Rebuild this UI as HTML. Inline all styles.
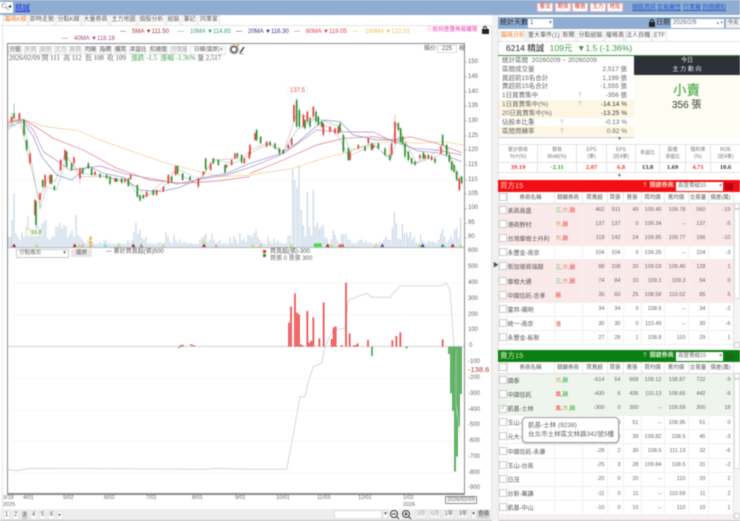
<!DOCTYPE html>
<html><head><meta charset="utf-8"><style>
html,body{margin:0;padding:0;background:#fff}
#p{position:relative;width:740px;height:521px;overflow:hidden;background:#fff;font-family:"Liberation Sans","Noto Sans CJK TC",sans-serif;font-size:6.5px;color:#555;filter:blur(.4px)}
.a,.t{position:absolute}.t{white-space:nowrap;line-height:9px}
.b{position:absolute;box-sizing:border-box;background:#f3f3f3;border:1px solid #e2e2e2;height:9px;line-height:7px;text-align:center;font-size:5.5px;color:#555;white-space:nowrap}
.tab{position:absolute;box-sizing:border-box;background:#fff;border:1px solid #e4e4e4;border-bottom:0;height:10px;line-height:9px;text-align:center;font-size:6px;color:#555;white-space:nowrap}
.red{position:absolute;top:3px;height:9px;width:16px;background:#fff;border:1px solid #f4c0c0;box-sizing:border-box;color:#c33;font-size:5.5px;line-height:7px;text-align:center}
.lnk{position:absolute;top:4px;color:#2255cc;text-decoration:underline;font-size:6px;white-space:nowrap;line-height:9px}
table{position:absolute;border-collapse:collapse;table-layout:fixed;font-size:5.5px;color:#666}
td{padding:0;white-space:nowrap;overflow:hidden;border-right:1px solid #f0f2f2;text-align:right;padding-right:2px;box-sizing:border-box}
.k td{height:14.2px;border-bottom:1px solid #f0f0f0}
.h td{height:11px;text-align:center;border-right:1px solid #e4e4e4;border-bottom:1px solid #ddd;padding:0;color:#555}
td.n{text-align:left;padding-left:0;color:#555;font-size:6px}
td.m{text-align:left;padding-left:1px;font-size:5.5px}
.c{display:inline-block;width:6px;height:6px;border:1px solid #ccc;background:#fff;vertical-align:-1px}
.p td{background:#fbe9e9}.g td{background:#edf5ec}
i{font-style:normal}.rr{color:#e33}.gg{color:#2a2}.oo{color:#c96}
.s{position:absolute;left:502px;width:125px;height:9px;line-height:9px;font-size:6.5px;color:#666;white-space:nowrap}
.s b{position:absolute;right:0;font-weight:normal}
.st{position:absolute;text-align:center;font-size:5px;line-height:6.5px;color:#777;white-space:nowrap}
.sv{position:absolute;text-align:center;font-family:"Liberation Serif",serif;font-size:6.5px;font-weight:bold;top:163px;line-height:9px;color:#333}
.y{position:absolute;left:468px;font-size:6px;line-height:8px;color:#666}
.x{position:absolute;top:495px;font-size:5.5px;line-height:7px;color:#666;text-align:left}
.lg{font-size:6px}
</style></head><body><div id="p">

<!-- top bar -->
<div class="a" style="left:0;top:0;width:740px;height:15px;background:#8fadd1"></div>
<div class="a" style="left:0;top:2px;width:13px;height:11px;background:#fff"></div>
<div class="t" style="left:1px;top:3px;font-size:7px;color:#555">🔍︎</div>
<div class="t" style="left:8px;top:3px;font-size:6px;color:#222">◂</div>
<div class="t" style="left:15px;top:3px;font-size:7.5px;color:#1a35e0;text-decoration:underline">精誠</div>
<div class="red" style="left:537px">看法</div><div class="red" style="left:555px">期貨</div><div class="red" style="left:572px">權值</div><div class="red" style="left:590px">主力</div><div class="red" style="left:607px">地址</div>
<span class="lnk" style="left:632px">個股資訊</span><span class="lnk" style="left:657px">交易屬性</span><span class="lnk" style="left:683px">行業屬</span><span class="lnk" style="left:702px">到價通知</span>

<!-- left tabs -->
<div class="a" style="left:0;top:15px;width:492px;height:10px;background:#fff"></div>
<div class="tab" style="left:3px;top:15px;width:25px;color:#e8883a">籌碼K線</div>
<div class="tab" style="left:29px;top:15px;width:26px">即時走勢</div>
<div class="tab" style="left:56px;top:15px;width:25px">分點K線</div>
<div class="tab" style="left:82px;top:15px;width:27px">大量券商</div>
<div class="tab" style="left:110px;top:15px;width:27px">主力地圖</div>
<div class="tab" style="left:138px;top:15px;width:27px">個股分析</div>
<div class="tab" style="left:166px;top:15px;width:15px">組裝</div>
<div class="tab" style="left:182px;top:15px;width:15px">筆記</div>
<div class="tab" style="left:198px;top:15px;width:22px">同業家</div>
<div class="a" style="left:0;top:25px;width:492px;height:1px;background:#e4e4e4"></div>
<div class="a" style="left:2px;top:26px;width:1px;height:483px;background:#e4e4e4"></div>
<div class="a" style="left:491px;top:26px;width:1px;height:483px;background:#e4e4e4"></div>

<!-- legend -->
<div class="t lg" style="left:120px;top:28px;color:#a33">—</div><div class="t lg" style="left:132px;top:28px;color:#a33">5MA ▼111.50</div>
<div class="t lg" style="left:178px;top:28px;color:#3a9a8a">—</div><div class="t lg" style="left:190px;top:28px;color:#3a9a8a">10MA ▼114.85</div>
<div class="t lg" style="left:236px;top:28px;color:#338">—</div><div class="t lg" style="left:248px;top:28px;color:#338">20MA ▼116.30</div>
<div class="t lg" style="left:294px;top:28px;color:#e04050">—</div><div class="t lg" style="left:306px;top:28px;color:#e04050">60MA ▼119.05</div>
<div class="t lg" style="left:352px;top:28px;color:#e8c25a">—</div><div class="t lg" style="left:365px;top:28px;color:#e8c25a">100MA ▼122.03</div>
<div class="t lg" style="left:62px;top:35px;color:#a04a80">—</div><div class="t lg" style="left:74px;top:35px;color:#a04a80">40MA ▼118.18</div>
<div class="t" style="left:427px;top:26px;color:#e830b0;font-size:5.6px">ⓘ如何查匯佈局權限</div>
<div class="a" style="left:482px;top:29px;width:7px;height:5px;background:#222"></div>
<div class="a" style="left:483px;top:26px;width:4px;height:4px;border:1px solid #222;border-bottom:0;box-sizing:border-box;border-radius:2px 2px 0 0"></div>

<!-- chart frame -->
<div class="a" style="left:7px;top:43px;width:458px;height:452px;box-sizing:border-box;border:1px solid #8a8a8a;border-bottom-width:2px"></div>
<div class="a" style="left:7px;top:247px;width:458px;height:1px;background:#aaa"></div>

<div class="b" style="left:8px;top:46px;width:14px">分圖</div>
<div class="b" style="left:24px;top:46px;width:13px;color:#aaa">外資</div>
<div class="b" style="left:39px;top:46px;width:13px;color:#aaa">投信</div>
<div class="b" style="left:54px;top:46px;width:13px;color:#aaa">主力</div>
<div class="b" style="left:69px;top:46px;width:13px;color:#aaa">新買</div>
<div class="b" style="left:84px;top:46px;width:13px">均線</div>
<div class="b" style="left:99px;top:46px;width:13px">指標</div>
<div class="b" style="left:114px;top:46px;width:13px">櫃買</div>
<div class="b" style="left:129px;top:46px;width:17px">本益比</div>
<div class="b" style="left:149px;top:46px;width:19px">紅綠燈</div>
<div class="b" style="left:170px;top:46px;width:17px;color:#aaa">分價量</div>
<div class="b" style="left:190px;top:46px;width:36px;text-align:left;padding-left:3px;background:#fff">日線(還原)<i style="position:absolute;right:2px;color:#999">▾</i></div>
<svg class="a" style="left:229px;top:44px" width="16" height="11" viewBox="0 0 16 11"><circle cx="5" cy="5.5" r="3" fill="none" stroke="#444" stroke-width="1.3"/><circle cx="5" cy="5.5" r="4.5" fill="none" stroke="#444" stroke-width=".8" stroke-dasharray="1 1"/><circle cx="9" cy="1.5" r="1" fill="#f80"/><path d="M11 9l4-6" stroke="#444" stroke-width="1.5"/><path d="M10 10h5" stroke="#777" stroke-width=".6"/></svg>
<div class="t" style="left:9px;top:54px;font-size:6.8px;color:#555;font-family:'Liberation Serif','Noto Serif CJK SC',serif">2026/02/09 開 111&nbsp; 高 112&nbsp; 低 108&nbsp; 收 109&nbsp;&nbsp; <span style="color:#3a9a3a">漲跌 -1.5&nbsp; 漲幅 -1.36%</span> 量 2,517</div>
<div class="t" style="left:424px;top:45px;font-size:6px;color:#666">贖价:</div>
<div class="a" style="left:437px;top:45px;width:20px;height:8px;border:1px solid #ddd;box-sizing:border-box;text-align:center;line-height:6px;font-size:6px">225</div>
<div class="t" style="left:459px;top:45px;font-size:5.5px">根</div>

<!-- price axis -->
<div class="y" style="top:58px">150</div><div class="y" style="top:73px">145</div><div class="y" style="top:88px">140</div><div class="y" style="top:102px">135</div><div class="y" style="top:117px">130</div><div class="y" style="top:132px">125</div><div class="y" style="top:146px">120</div><div class="y" style="top:161px">115</div><div class="y" style="top:176px">110</div><div class="y" style="top:190px">105</div><div class="y" style="top:204px">100</div><div class="y" style="top:219px">95</div><div class="y" style="top:233px">90</div>
<div class="y" style="top:247px">600</div><div class="y" style="top:263px">500</div><div class="y" style="top:279px">400</div><div class="y" style="top:295px">300</div><div class="y" style="top:311px">200</div><div class="y" style="top:326px">100</div><div class="y" style="top:342px;left:469px">0</div><div class="y" style="top:358px">-100</div><div class="y" style="top:374px">-200</div><div class="y" style="top:390px">-300</div><div class="y" style="top:406px">-400</div><div class="y" style="top:421px">-500</div><div class="y" style="top:437px">-600</div><div class="y" style="top:453px">-700</div><div class="y" style="top:469px">-800</div><div class="y" style="top:484px">-900</div>
<div class="t" style="left:468px;top:365px;font-size:7.5px;color:#b33">-138.6</div>

<svg class="a" style="left:0;top:0" width="480" height="521" viewBox="0 0 480 521">
<path d="M465 62h2M465 77h2M465 92h2M465 106h2M465 121h2M465 136h2M465 150h2M465 165h2M465 180h2M465 194h2M465 209h2M465 223h2M465 238h2" stroke="#888" stroke-width=".6"/>
<path d="M8 180H463" stroke="#f2f2f2" stroke-width=".6"/>
<path d="M12 283H462M12 315H462M12 378H462M12 410H462M12 441H462M12 473H462" stroke="#efefef" stroke-width=".6"/>
<path d="M8 346.5H464" stroke="#c0c0c0" stroke-width=".7"/>
<g transform="translate(0,80) scale(.33333)" fill="none" stroke-linejoin="round">
<path d="M26 503V470M32 503V470M36 503V420M42 503V340M48 503V460M54 503V470M60 503V480M66 503V455M72 503V470M78 503V440M84 503V408M90 503V445M96 503V455M102 503V470M108 503V470M114 503V435M120 503V445M126 503V430M132 503V425M138 503V420M144 503V475M150 503V480M156 503V470M162 503V470M168 503V440M174 503V440M180 503V428M186 503V445M192 503V435M198 503V440M204 503V470M210 503V460M216 503V450M222 503V470M228 503V405M234 503V465M240 503V470M246 503V478M252 503V485M258 503V490M264 503V480M270 503V468M276 503V485M282 503V490M288 503V492M294 503V490M300 503V485M306 503V490M312 503V482M318 503V480M324 503V490M330 503V488M336 503V492M342 503V490M348 503V492M354 503V488M360 503V490M366 503V492M372 503V492M378 503V490M384 503V480M390 503V488M396 503V480M402 503V455M408 503V428M414 503V460M420 503V450M426 503V472M432 503V478M438 503V470M444 503V490M450 503V488M456 503V492M462 503V490M468 503V492M474 503V488M480 503V486M486 503V492M492 503V488M498 503V458M504 503V470M510 503V485M516 503V490M522 503V465M528 503V480M534 503V488M540 503V478M546 503V490M552 503V485M558 503V488M564 503V492M570 503V488M576 503V490M582 503V492M588 503V490M594 503V492M600 503V480M606 503V472M612 503V468M618 503V460M624 503V485M630 503V478M636 503V460M642 503V480M648 503V490M654 503V486M660 503V480M666 503V492M672 503V488M678 503V490M684 503V492M690 503V472M696 503V488M702 503V468M708 503V478M714 503V490M720 503V460M726 503V480M732 503V475M738 503V485M744 503V465" stroke="#c7d6e6" stroke-width="3.6"/>
<path d="M22 120L70 118L130 138L180 146L230 150L300 180L400 215L500 250L600 275L660 290L750 285" stroke="#f0c98a" stroke-width="2"/>
<path d="M22 125L70 118L110 142L160 175L250 210L350 265L450 300L550 310L650 303L750 290" stroke="#e0707c" stroke-width="2"/>
<path d="M22 130L70 120L100 150L130 215L160 235L210 270L300 258L370 280L420 290L470 298L530 312L600 298L680 285L750 262" stroke="#b888b8" stroke-width="2"/>
<path d="M22 140L70 125L100 170L125 230L170 285L215 300L265 258L310 280L370 292L420 330L480 335L540 322L600 295L680 280L750 250" stroke="#7f8fc4" stroke-width="2"/>
<path d="M22 150L68 118L90 220L120 385L140 320L170 330L200 230L240 280L300 285L385 305L420 355L490 325L530 265L600 300L640 240L700 250L750 225" stroke="#8fd0bb" stroke-width="1.8"/>
<path d="M22 135L60 118L85 230L118 360L145 290L165 305L195 220L240 290L320 290L410 320L440 350L520 275L590 310L640 240L720 235L750 215" stroke="#e09090" stroke-width="1.5"/>
<path d="M35 98V135M58 95V125M90 215V255M105 355V410M120 335V388M135 280V325M150 280V315M182 235V275M195 205V245M222 228V255M240 262V310M392 280V300M375 292V308M345 292V308M285 272V288M440 332V352M470 328V348M490 318V338M505 282V315M527 255V290M595 290V328M610 272V290M632 245V275M680 250V265M705 217V238M748 210V238M695 236V258M733 232V252" stroke="#e67a7a" stroke-width="1.5"/>
<path d="M35 110V125M58 100V118M90 220V250M105 360V405M120 340V360M135 285V320M150 285V310M182 240V270M195 210V240M222 232V250M240 265V295M392 285V298M375 295V305M345 295V305M285 275V285M440 335V350M470 330V345M490 320V335M505 285V310M527 258V285M595 295V320M610 275V285M632 250V270M680 255V262M705 220V235M748 215V235M695 240V255M733 235V250" stroke="#e83b3b" stroke-width="5"/>
<path d="M42 70V118M72 118V170M80 178V215M108 360V445M128 298V325M155 282V315M163 315V333M200 212V265M215 248V275M248 262V284M265 245V268M275 262V288M300 280V295M320 283V298M330 288V316M350 293V308M365 293V312M385 293V322M412 313V355M420 343V365M430 343V358M460 328V348M515 288V308M533 255V284M548 278V303M570 288V303M617 232V272M640 232V254M655 238V258M675 252V280M712 216V236M725 222V252" stroke="#3ca43c" stroke-width="1.5"/>
<path d="M42 100V115M72 120V165M80 180V210M108 365V435M128 300V320M155 285V310M163 318V330M200 215V260M215 250V270M248 265V280M265 250V265M275 265V285M300 282V292M320 285V295M330 290V312M350 295V305M365 295V308M385 295V318M412 315V350M420 345V362M430 345V355M460 330V345M515 290V305M533 258V280M548 280V300M570 290V300M617 235V268M640 235V250M655 240V255M675 255V278M712 220V232M725 225V248" stroke="#2f8f2f" stroke-width="5"/>
<path d="M36 501l6-11 6 11zM218 501l6-11 6 11zM394 501l6-11 6 11zM606 501l6-11 6 11z" fill="#a82a3a"/>
<path d="M104 501l6-11 6 11zM232 501l6-11 6 11zM352 501l6-11 6 11zM484 501l6-11 6 11zM606 490l6-11 6 11z" fill="#b7e67a"/>
<path d="M242 501l6-11 6 11zM642 501l6-11 6 11z" fill="#efa6a0"/>
<path d="M266 501l6-11 6 11zM266 490l6-10 6 10zM266 478l6-10 6 10z" fill="#f2b040"/>
<path d="M310 501l6-11 6 11z" fill="#6fe2e2"/><path d="M418 501l6-11 6 11z" fill="#999"/>
<rect x="92" y="452" width="36" height="16" fill="#eef6d8"/>
</g>
<g transform="translate(250,80) scale(.33333)" fill="none">
<path d="M0 503V465M6 503V470M12 503V460M18 503V448M24 503V470M30 503V480M36 503V488M42 503V490M48 503V492M54 503V470M60 503V485M66 503V490M72 503V475M78 503V488M84 503V482M90 503V488M96 503V490M102 503V492M108 503V490M114 503V468M120 503V465M128 503V268M134 503V300M141 503V323M147 503V255M154 503V388M160 503V435M166 503V470M172 503V335M178 503V440M184 503V465M190 503V330M196 503V440M202 503V428M208 503V445M214 503V440M220 503V435M226 503V472M232 503V475M238 503V490M244 503V478M250 503V450M256 503V465M262 503V480M268 503V490M275 503V462M281 503V462M288 503V462M294 503V478M300 503V480M306 503V488M312 503V490M318 503V492M324 503V484M330 503V478M336 503V480M342 503V488M348 503V482M354 503V490M360 503V486M366 503V490M372 503V492M378 503V488M384 503V490M390 503V484M396 503V488M402 503V478M408 503V470M414 503V478M420 503V480M427 503V445M433 503V397M439 503V430M445 503V475M451 503V478M457 503V432M463 503V460M470 503V458M475 503V472M481 503V455M487 503V478M493 503V470M499 503V488M505 503V490M512 503V465M518 503V482M524 503V488M530 503V490M536 503V482M542 503V486M548 503V484M554 503V486M560 503V490M566 503V480M572 503V460M578 503V447M584 503V470M590 503V488M596 503V480M602 503V468M608 503V478M614 503V448M620 503V445M626 503V472M632 503V412" stroke="#c7d6e6" stroke-width="3.6"/>
<path d="M0 285L130 265L220 235L300 215L370 190L430 185L500 190L580 185L640 195" stroke="#f0c98a" stroke-width="2"/>
<path d="M0 280L100 240L200 195L280 175L370 170L430 180L480 170L560 190L635 218" stroke="#e0707c" stroke-width="2"/>
<path d="M0 262L100 222L200 150L260 155L310 156L370 156L430 185L490 205L560 210L635 225" stroke="#b888b8" stroke-width="2"/>
<path d="M0 250L90 222L140 190L220 120L270 125L310 165L380 180L440 180L500 212L570 220L635 245" stroke="#7f8fc4" stroke-width="2"/>
<path d="M0 220L60 190L100 215L140 150L200 115L270 140L300 210L370 190L420 240L445 170L490 250L540 230L580 190L635 300" stroke="#8fd0bb" stroke-width="1.8"/>
<path d="M0 210L50 190L100 220L140 100L200 120L260 160L295 230L370 195L415 230L440 130L500 250L570 225L590 195L632 325" stroke="#e09090" stroke-width="1.5"/>
<path d="M0 190V230M15 155V185M50 182V204M115 190V208M125 172V198M132 72V128M160 100V145M172 90V130M190 78V115M220 125V170M240 135V160M255 140V165M265 135V165M300 210V245M325 192V210M355 172V195M370 192V210M425 185V230M435 105V195M510 220V240M525 222V240M545 225V245M573 195V225M628 290V335" stroke="#e67a7a" stroke-width="1.5"/>
<path d="M0 195V225M15 160V180M50 185V200M115 195V205M125 175V195M132 75V125M160 105V140M172 95V125M190 80V110M220 130V165M240 140V155M255 145V160M265 140V160M300 215V240M325 195V205M355 175V190M370 195V205M425 190V225M435 125V190M510 225V235M525 225V235M545 230V240M573 200V220M628 295V330" stroke="#e83b3b" stroke-width="5"/>
<path d="M20 145V185M32 168V193M60 182V198M75 187V208M88 202V228M100 207V222M140 55V145M148 85V145M165 117V150M180 112V145M198 90V130M205 107V140M215 122V145M270 127V160M280 162V220M295 202V243M345 197V215M365 187V213M385 187V208M405 202V230M420 222V245M445 125V155M452 142V190M458 167V195M465 187V235M475 212V245M485 232V255M495 242V258M520 215V238M535 222V238M555 232V252M578 162V198M590 190V230M598 222V250M605 242V275M612 252V280M620 272V305M635 287V315" stroke="#3ca43c" stroke-width="1.5"/>
<path d="M20 150V180M32 170V190M60 185V195M75 190V205M88 205V220M100 210V220M140 60V140M148 90V140M165 120V145M180 115V140M198 95V125M205 110V135M215 125V140M270 130V155M280 165V215M295 205V240M345 200V212M365 190V210M385 190V205M405 205V225M420 225V240M445 130V150M452 145V185M458 170V190M465 190V230M475 215V240M485 235V250M495 245V255M520 218V235M535 225V235M555 235V248M578 165V195M590 195V225M598 225V245M605 245V270M612 255V275M620 275V300M635 290V310" stroke="#2f8f2f" stroke-width="5"/>
<path d="M2 501l6-11 6 11zM117 501l6-11 6 11zM239 501l6-11 6 11zM372 501l6-11 6 11zM502 501l6-11 6 11zM626 501l6-11 6 11z" fill="#b7e67a"/>
<path d="M26 501l6-11 6 11z" fill="#f2c070"/><rect x="191" y="490" width="25" height="11" rx="5" fill="#44e044"/>
<path d="M227 501l6-11 6 11zM602 501l6-11 6 11z" fill="#a82a3a"/><path d="M264 501l6-11 6 11zM272 501l6-11 6 11z" fill="#e05a4a"/>
<path d="M391 501l6-11 6 11z" fill="#7a3aa0"/><path d="M512 501l6-11 6 11z" fill="#2a3aa0"/><path d="M572 501l6-11 6 11z" fill="#2a9a8a"/>
<rect x="110" y="21" width="62" height="22" rx="3" fill="#fff" stroke="#eadfc0"/>
</g>
<g transform="translate(250,250) scale(.33333)" fill="none">
<path d="M-730 657L-700 662L-660 655L-400 656L-140 658L-100 655L0 658L110 658L125 580L150 440L165 440L175 395L190 350L215 340L225 290L250 240L285 235L295 150L350 130L365 142L420 142L450 108L570 108L590 100L600 120L612 290L618 460L630 560" stroke="#cfcfcf" stroke-width="2.4"/>
<path d="M117 290V218M123 290V170M135 290V130M141 290V188M147 290V193M153 290V283M159 290V287M172 290V183M178 290V278M184 290V272M190 290V202M208 290V265M221 290V157M245 290V267M251 290V232M257 290V229M275 290V285M288 290V98M299 290V250M311 290V286M317 290V285M323 290V280M354 290V270M427 290V271M439 290V258M451 290V247M578 290V268" stroke="#ee4a4a" stroke-width="5"/>
<path d="M366 290V318M470 290V295M597 290V312M603 290V430M609 290V483M615 290V665M621 290V620M627 290V530M633 290V432" stroke="#44a44c" stroke-width="5"/>
<path d="M618 300L618 460L630 560" stroke="#d9e8d9" stroke-width="2"/>
<path d="M-210 287h12M-180 285h8M-172 288h6" stroke="#e33" stroke-width="3"/>
<path d="M-215 292h6" stroke="#393" stroke-width="3"/>
</g>
<rect x="26" y="230" width="14" height="6" fill="#f4f9e4"/>
</svg>
<div class="t" style="left:31px;top:229px;font-size:5.5px;color:#5a8a3a">93.8</div>
<div class="t" style="left:290px;top:87px;font-size:6px;color:#d55">137.5</div>

<!-- lower controls -->
<div class="a" style="left:16px;top:249px;width:53px;height:9px;border:1px solid #ccc;box-sizing:border-box;font-size:5.5px;line-height:7px;padding-left:2px;color:#666">分點進出<i style="position:absolute;right:2px">▾</i></div>
<div class="a" style="left:71px;top:249px;width:21px;height:8px;background:#e6e6e6;text-align:center;font-size:5.5px;line-height:8px">還原</div>
<div class="t" style="left:106px;top:248px;font-size:6px;color:#555">— 累計買賣超(張)500</div>
<div class="t" style="left:270px;top:248px;font-size:6px;color:#555">買賣超(張)-300</div>
<div class="t" style="left:270px;top:255px;font-size:6px;color:#666">買張 0 賣張 300</div>
<div class="a" style="left:263px;top:250px;width:3px;height:3px;background:#d33"></div>
<div class="a" style="left:263px;top:254px;width:3px;height:3px;background:#292"></div>

<!-- x axis -->
<div class="x" style="left:3px">3/18<br>2025</div><div class="x" style="left:23px">4/01</div><div class="x" style="left:63px">5/02</div><div class="x" style="left:104px">6/02</div><div class="x" style="left:146px">7/01</div><div class="x" style="left:192px">8/01</div><div class="x" style="left:235px">9/01</div><div class="x" style="left:276px">10/01</div><div class="x" style="left:317px">11/03</div><div class="x" style="left:358px">12/01</div><div class="x" style="left:403px">1/02<br>2026</div>
<div class="a" style="left:445px;top:496px;width:32px;height:8px;border:1px solid #888;box-sizing:border-box;border-radius:1px;font-size:5.5px;line-height:6px;text-align:center;background:#fff">2026/02/09</div>

<!-- bottom bar -->
<div class="a" style="left:0;top:509px;width:492px;height:11px;background:#eeeeee"></div>
<div class="a" style="left:0;top:520px;width:740px;height:1px;background:#bbb"></div>
<div class="b" style="left:3px;top:511px;width:7px;background:#fff;font-size:6px">1</div><div class="b" style="left:12px;top:511px;width:7px;background:#fff;font-size:6px">2</div><div class="b" style="left:21px;top:511px;width:7px;background:#ccc;font-size:6px">3</div><div class="b" style="left:30px;top:511px;width:7px;background:#fff;font-size:6px">4</div><div class="b" style="left:39px;top:511px;width:7px;background:#fff;font-size:6px">5</div><div class="b" style="left:48px;top:511px;width:7px;background:#fff;font-size:6px">6</div><div class="b" style="left:57px;top:511px;width:6px;background:#fff;font-size:5px">▸</div>
<div class="a" style="left:334px;top:510px;width:48px;height:9px;background:#fff;border:1px solid #ddd;box-sizing:border-box"></div>
<div class="b" style="left:383px;top:510px;width:5px;background:#fff">▾</div>
<svg class="a" style="left:389px;top:509px" width="24" height="11" viewBox="0 0 24 11" fill="none" stroke="#444"><circle cx="5" cy="5" r="3.5"/><path d="M7.5 7.5l2.500 2.500M3 5h4"/><circle cx="17" cy="5" r="3.5"/><path d="M19.5 7.5l2.500 2.500M15 5h4M17 3v4"/></svg>
<div class="b" style="left:415px;top:510px;width:12px;color:#999;background:#f6f6f6">3月</div><div class="b" style="left:429px;top:510px;width:12px;color:#999;background:#f6f6f6">6月</div><div class="b" style="left:443px;top:510px;width:12px;background:#f6f6f6">1年</div><div class="b" style="left:457px;top:510px;width:12px;background:#f6f6f6">3年</div><div class="b" style="left:471px;top:510px;width:5px;background:#fff">▾</div><div class="b" style="left:477px;top:510px;width:13px;background:#ccc">查價</div>

<!-- splitter -->
<div class="a" style="left:492px;top:15px;width:6px;height:506px;background:#f1f1f1"></div>
<div class="t" style="left:493px;top:262px;font-size:6px;color:#555">▶</div>
<div class="a" style="left:498px;top:15px;width:1px;height:506px;background:#e4e4e4"></div>

<!-- right panel head -->
<div class="a" style="left:498px;top:17px;width:242px;height:12px;background:#8fadd1"></div>
<div class="t" style="left:500px;top:18px;font-size:7px;color:#223">統計天數</div>
<div class="a" style="left:528px;top:18.5px;width:25px;height:9px;background:#fff;font-size:6px;line-height:9px;padding-left:2px;box-sizing:border-box">1<i style="position:absolute;right:1px;color:#888">▾</i></div>
<div class="a" style="left:649px;top:22px;width:6px;height:5px;background:#222"></div>
<div class="a" style="left:650px;top:19px;width:4px;height:4px;border:1px solid #222;border-bottom:0;box-sizing:border-box;border-radius:2px 2px 0 0"></div>
<div class="t" style="left:656px;top:18px;font-size:7px;color:#223">日期</div>
<div class="a" style="left:671px;top:18.5px;width:53px;height:9px;background:#fff;font-size:6px;line-height:9px;padding-left:2px;box-sizing:border-box;color:#666">2026/2/9 <i style="position:absolute;right:1px;color:#888;font-size:5px">▴ ▾</i></div>
<div class="a" style="left:726px;top:18.5px;width:14px;height:9px;background:#f0f0f0;font-size:5.5px;line-height:9px;text-align:center">今天</div>

<div class="tab" style="left:500px;top:31px;width:26px;color:#e8883a">籌碼分析</div>
<div class="tab" style="left:527px;top:31px;width:33px">重大事件(1)</div>
<div class="tab" style="left:561px;top:31px;width:15px">新聞</div>
<div class="tab" style="left:577px;top:31px;width:27px">分點組裝</div>
<div class="tab" style="left:605px;top:31px;width:19px">權格表</div>
<div class="tab" style="left:625px;top:31px;width:26px">法人自機</div>
<div class="tab" style="left:652px;top:31px;width:15px">ETF</div>
<div class="a" style="left:498px;top:41px;width:242px;height:1px;background:#e4e4e4"></div>

<div class="t" style="left:506px;top:43px;font-size:8.5px;line-height:11px;color:#222">6214 精誠 <span style="color:#3a9a3a;margin-left:3px">109元&nbsp; ▼1.5 (-1.36%)</span></div>
<div class="a" style="left:498px;top:54.5px;width:242px;height:1.5px;background:#3a9a3a"></div>

<div class="a" style="left:499px;top:56px;width:135px;height:81px;background:#fff;border-bottom:1px solid #ccc"></div>
<div class="a" style="left:499px;top:100px;width:135px;height:17.5px;background:#fdf6e2"></div>
<div class="a" style="left:499px;top:126px;width:135px;height:10px;background:#fdf6e2"></div>
<div class="s" style="top:56px;color:#666">統計區間&nbsp; 20260209 ~ 20260209</div>
<div class="s" style="top:65px">區間成交量<b>2,517 張</b></div>
<div class="s" style="top:74px">買超前15名合計<b>1,199 張</b></div>
<div class="s" style="top:82px">賣超前15名合計<b>-1,555 張</b></div>
<div class="s" style="top:91px">1日買賣集中<b>-356 張</b><i style="position:absolute;left:76px;color:#aaa">?</i></div>
<div class="s" style="top:100px">1日買賣集中(%)<b style="color:#333">-14.14 %</b><i style="position:absolute;left:76px;color:#aaa">?</i></div>
<div class="s" style="top:109px">20日買賣集中(%)<b style="color:#333">-13.25 %</b></div>
<div class="s" style="top:118px">佔股本比重<b>-0.13 %</b><i style="position:absolute;left:58px;color:#aaa">?</i></div>
<div class="s" style="top:127px">區間周轉率<b>0.92 %</b><i style="position:absolute;left:58px;color:#aaa">?</i></div>

<div class="a" style="left:634px;top:56px;width:106px;height:19px;background:#2d3038;color:#eee;text-align:center;font-size:6px;line-height:9px;padding-top:1px;box-sizing:border-box">今日<br>主 力 動 向</div>
<div class="a" style="left:634px;top:75px;width:106px;height:62px;background:#fdfdf3"></div>
<div class="t" style="left:673px;top:83px;font-size:13.5px;line-height:16px;color:#2d9a2d">小賣</div>
<div class="t" style="left:672px;top:100px;font-size:10px;line-height:12px;color:#333">356 張</div>
<div class="t" style="left:617px;top:135px;font-size:5px;color:#666">▼</div>

<!-- stats -->
<div class="a" style="left:499px;top:144px;width:241px;height:29px;border:1px solid #e3e3e3;border-width:1px 0;box-sizing:border-box"></div>
<div class="a" style="left:499px;top:161.5px;width:241px;height:1px;background:#e3e3e3"></div>
<div class="a" style="left:537px;top:144px;width:1px;height:29px;background:#e3e3e3"></div><div class="a" style="left:576px;top:144px;width:1px;height:29px;background:#e3e3e3"></div><div class="a" style="left:606px;top:144px;width:1px;height:29px;background:#e3e3e3"></div><div class="a" style="left:635px;top:144px;width:1px;height:29px;background:#e3e3e3"></div><div class="a" style="left:659px;top:144px;width:1px;height:29px;background:#e3e3e3"></div><div class="a" style="left:685px;top:144px;width:1px;height:29px;background:#e3e3e3"></div><div class="a" style="left:710px;top:144px;width:1px;height:29px;background:#e3e3e3"></div>
<div class="st" style="left:499px;top:147px;width:38px">累計營收<br>YoY(%)</div>
<div class="st" style="left:538px;top:147px;width:38px">營收<br>MoM(%)</div>
<div class="st" style="left:577px;top:147px;width:29px">EPS<br>(季)</div>
<div class="st" style="left:607px;top:147px;width:28px">EPS<br>(近4季)</div>
<div class="st" style="left:636px;top:150px;width:23px">本益比</div>
<div class="st" style="left:660px;top:147px;width:25px">股價<br>淨值比</div>
<div class="st" style="left:686px;top:147px;width:24px">殖利率<br>(%)</div>
<div class="st" style="left:711px;top:147px;width:29px">ROE<br>(近4季)</div>
<div class="sv" style="left:499px;width:38px;color:#e33">39.19</div><div class="sv" style="left:538px;width:38px;color:#2a2">-2.11</div><div class="sv" style="left:577px;width:29px;color:#e33">2.07</div><div class="sv" style="left:607px;width:28px;color:#e33">6.8</div><div class="sv" style="left:636px;width:23px">13.8</div><div class="sv" style="left:660px;width:25px">1.69</div><div class="sv" style="left:686px;width:24px;color:#e33">4.71</div><div class="sv" style="left:711px;width:29px">10.6</div>
<div class="t" style="left:617px;top:172px;font-size:5px;color:#666">▼</div>

<!-- buy -->
<div class="a" style="left:498px;top:180px;width:242px;height:12px;background:#f00f14"></div>
<div class="t" style="left:500px;top:181px;font-size:7.5px;color:#ffd0b0">買方15</div>
<div class="t" style="left:643px;top:182px;font-size:6px;color:#ffdcc0">?&nbsp; <b>關鍵券商</b>:</div>
<div class="a" style="left:676px;top:181.5px;width:47px;height:9px;background:#fff;font-size:5.5px;line-height:9px;padding-left:2px;box-sizing:border-box;color:#666">高登賈組15<i style="position:absolute;right:1px;color:#888">▾</i></div>
<div class="a" style="left:725px;top:183px;width:8px;height:7px;background:#b01"></div>

<table style="left:499px;top:192px;width:234px"><colgroup><col style="width:8px"><col style="width:47px"><col style="width:28px"><col style="width:25px"><col style="width:16px"><col style="width:18px"><col style="width:23px"><col style="width:24px"><col style="width:20px"><col style="width:25px"></colgroup>
<tr class="h"><td><span class="c"></span></td><td>券商名稱</td><td>關鍵券商</td><td>買賣超</td><td>買張</td><td>賣張</td><td>買均價</td><td>賣均價</td><td>交易量</td><td>價差(萬)</td></tr>
<tr class="k p"><td><span class="c"></span></td><td class="n">美商高盛</td><td class="m"><i class="gg">三</i>,<i class="oo">市</i>,<i class="rr">融</i></td><td>462</td><td>511</td><td>49</td><td>109.45</td><td>109.78</td><td>560</td><td>-19</td></tr>
<tr class="k p"><td><span class="c"></span></td><td class="n">港商野村</td><td class="m"><i class="oo">市</i>,<i class="rr">融</i></td><td>137</td><td>137</td><td>0</td><td>109.34</td><td>--</td><td>137</td><td>-5</td></tr>
<tr class="k p"><td><span class="c"></span></td><td class="n">台灣摩根士丹利</td><td class="m"><i class="oo">市</i>,<i class="rr">融</i></td><td>118</td><td>142</td><td>24</td><td>109.85</td><td>109.77</td><td>166</td><td>-10</td></tr>
<tr class="k"><td><span class="c"></span></td><td class="n">永豐金-南京</td><td class="m"></td><td>104</td><td>104</td><td>0</td><td>109.26</td><td>--</td><td>104</td><td>-3</td></tr>
<tr class="k p"><td><span class="c"></span></td><td class="n">新加坡商瑞銀</td><td class="m"><i class="gg">三</i>,<i class="oo">市</i>,<i class="rr">融</i></td><td>88</td><td>108</td><td>20</td><td>109.03</td><td>109.45</td><td>128</td><td>1</td></tr>
<tr class="k p"><td><span class="c"></span></td><td class="n">摩根大通</td><td class="m"><i class="gg">三</i>,<i class="oo">市</i>,<i class="rr">融</i></td><td>74</td><td>84</td><td>10</td><td>109.1</td><td>109.3</td><td>94</td><td>0</td></tr>
<tr class="k p"><td><span class="c"></span></td><td class="n">中國信託-忠孝</td><td class="m"><i class="rr">融</i></td><td>35</td><td>60</td><td>25</td><td>108.58</td><td>110.02</td><td>85</td><td>5</td></tr>
<tr class="k"><td><span class="c"></span></td><td class="n">富邦-陽明</td><td class="m"></td><td>34</td><td>34</td><td>0</td><td>108.6</td><td>--</td><td>34</td><td>-2</td></tr>
<tr class="k"><td><span class="c"></span></td><td class="n">統一-南京</td><td class="m"><i class="rr">落</i></td><td>30</td><td>30</td><td>0</td><td>110.49</td><td>--</td><td>30</td><td>-6</td></tr>
<tr class="k"><td><span class="c"></span></td><td class="n">永豐金-板新</td><td class="m"></td><td>27</td><td>28</td><td>1</td><td>108.8</td><td>110</td><td>29</td><td>1</td></tr>
</table>
<div class="a" style="left:733px;top:203px;width:7px;height:145px;background:#f4f4f4;border-left:1px solid #e4e4e4;box-sizing:border-box"><div class="a" style="left:0;top:0;width:6px;height:6px;background:#fff;border:1px solid #ccc;box-sizing:border-box"></div><div class="a" style="left:0;top:6px;width:6px;height:90px;background:#fff;border:1px solid #ddd;box-sizing:border-box"></div><div class="a" style="left:0;bottom:0;width:6px;height:6px;background:#fff;border:1px solid #ccc;box-sizing:border-box"></div></div>

<!-- sell -->
<div class="a" style="left:498px;top:350px;width:242px;height:12px;background:#0b7f12"></div>
<div class="t" style="left:500px;top:351px;font-size:7.5px;color:#c8f0c0">賣方15</div>
<div class="t" style="left:643px;top:352px;font-size:6px;color:#d8f0d0">?&nbsp; <b>關鍵券商</b>:</div>
<div class="a" style="left:676px;top:351.5px;width:47px;height:9px;background:#fff;font-size:5.5px;line-height:9px;padding-left:2px;box-sizing:border-box;color:#666">高登賣組15<i style="position:absolute;right:1px;color:#888">▾</i></div>
<div class="a" style="left:725px;top:353px;width:8px;height:7px;background:#1a6a1a"></div>

<table style="left:499px;top:362px;width:234px"><colgroup><col style="width:8px"><col style="width:47px"><col style="width:28px"><col style="width:25px"><col style="width:16px"><col style="width:18px"><col style="width:23px"><col style="width:24px"><col style="width:20px"><col style="width:25px"></colgroup>
<tr class="h"><td><span class="c"></span></td><td>券商名稱</td><td>關鍵券商</td><td>買賣超</td><td>買張</td><td>賣張</td><td>買均價</td><td>賣均價</td><td>交易量</td><td>價差(萬)</td></tr>
<tr class="k g"><td><span class="c"></span></td><td class="n">國泰</td><td class="m"><i class="oo">市</i>,<i class="gg">融</i></td><td>-614</td><td>54</td><td>668</td><td>109.12</td><td>108.87</td><td>722</td><td>-9</td></tr>
<tr class="k g"><td><span class="c"></span></td><td class="n">中國信託</td><td class="m"><i class="rr">風</i>,<i class="gg">融</i></td><td>-430</td><td>6</td><td>436</td><td>110.13</td><td>108.65</td><td>442</td><td>-9</td></tr>
<tr class="k g"><td><span class="c" style="text-align:center;font-size:5px;line-height:5px">✓</span></td><td class="n">凱基-士林</td><td class="m"><i class="rr">風</i>,<i class="oo">市</i>,<i class="gg">融</i></td><td>-300</td><td>0</td><td>300</td><td>--</td><td>109.59</td><td>300</td><td>18</td></tr>
<tr class="k"><td><span class="c"></span></td><td class="n">玉山-板橋</td><td class="m"></td><td>-51</td><td>0</td><td>51</td><td>--</td><td>108.95</td><td>51</td><td>0</td></tr>
<tr class="k"><td><span class="c"></span></td><td class="n">元大-南港</td><td class="m"></td><td>-33</td><td>6</td><td>39</td><td>109.82</td><td>108.5</td><td>45</td><td>-3</td></tr>
<tr class="k"><td><span class="c"></span></td><td class="n">中國信託-永康</td><td class="m"></td><td>-28</td><td>2</td><td>30</td><td>108.5</td><td>111.13</td><td>32</td><td>-6</td></tr>
<tr class="k"><td><span class="c"></span></td><td class="n">玉山-台南</td><td class="m"></td><td>-25</td><td>3</td><td>28</td><td>109.84</td><td>108.5</td><td>31</td><td>-2</td></tr>
<tr class="k"><td><span class="c"></span></td><td class="n">日茂</td><td class="m"></td><td>-20</td><td>0</td><td>20</td><td>--</td><td>110</td><td>20</td><td>2</td></tr>
<tr class="k"><td><span class="c"></span></td><td class="n">台新-萬讀</td><td class="m"></td><td>-11</td><td>0</td><td>11</td><td>--</td><td>110.59</td><td>11</td><td>2</td></tr>
<tr class="k"><td><span class="c"></span></td><td class="n">凱基-中山</td><td class="m"></td><td>-10</td><td>0</td><td>10</td><td>--</td><td>110</td><td>10</td><td>1</td></tr>
</table>
<div class="a" style="left:733px;top:373px;width:7px;height:146px;background:#f4f4f4;border-left:1px solid #e4e4e4;box-sizing:border-box"><div class="a" style="left:0;top:0;width:6px;height:6px;background:#fff;border:1px solid #ccc;box-sizing:border-box"></div><div class="a" style="left:0;top:6px;width:6px;height:90px;background:#fff;border:1px solid #ddd;box-sizing:border-box"></div><div class="a" style="left:0;bottom:0;width:6px;height:6px;background:#fff;border:1px solid #ccc;box-sizing:border-box"></div></div>
<div class="a" style="left:499px;top:515px;width:234px;height:5px;background:#fbeeee"></div>

<!-- tooltip -->
<div class="a" style="left:522px;top:417px;width:97px;height:26px;background:#fff;border:1px solid #999;border-radius:4px;box-sizing:border-box;box-shadow:0 1px 2px #ccc;font-size:6.5px;line-height:8.5px;padding:4px 0 0 5px;color:#666;white-space:nowrap">凱基-士林 (9238)<br>台北市士林區文林路342號5樓</div>
</div></body></html>
